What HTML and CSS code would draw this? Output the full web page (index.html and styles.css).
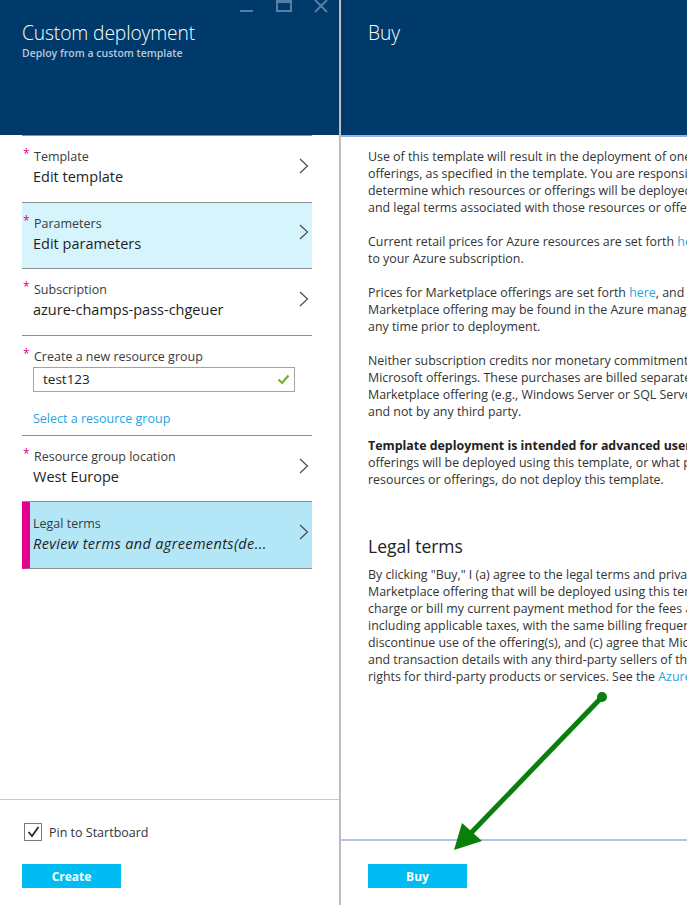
FILE: index.html
```html
<!DOCTYPE html>
<html>
<head>
<meta charset="utf-8">
<title>Custom deployment - Buy</title>
<link rel="stylesheet" href="styles.css">
</head>
<body>
<div class="app">
  <section class="blade blade-left">
    <header class="blade-header">
      <h1 class="blade-title">Custom deployment</h1>
      <div class="blade-subtitle">Deploy from a custom template</div>
      <svg class="win-controls" width="110" height="20" viewBox="0 0 110 20">
        <line x1="10" y1="11" x2="23" y2="11" stroke="#5a7da5" stroke-width="2"/>
        <rect x="47" y="-3" width="14" height="14" fill="none" stroke="#5a7da5" stroke-width="2"/>
        <rect x="47" y="-3" width="14" height="6" fill="#5a7da5"/>
        <line x1="85" y1="0" x2="97" y2="12" stroke="#5a7da5" stroke-width="2"/>
        <line x1="97" y1="0" x2="85" y2="12" stroke="#5a7da5" stroke-width="2"/>
      </svg>
    </header>
    <div class="blade-body">
      <div class="list">
        <div class="item">
          <div class="item-text">
            <div class="label"><span class="req">*</span>Template</div>
            <div class="value">Edit template</div>
          </div>
          <svg class="chev" width="10" height="16" viewBox="0 0 10 16"><polyline points="1,1 8.5,8 1,15" fill="none" stroke="#4a4a4a" stroke-width="1.2"/></svg>
        </div>
        <div class="item item-hl">
          <div class="item-text">
            <div class="label"><span class="req">*</span>Parameters</div>
            <div class="value">Edit parameters</div>
          </div>
          <svg class="chev" width="10" height="16" viewBox="0 0 10 16"><polyline points="1,1 8.5,8 1,15" fill="none" stroke="#4a4a4a" stroke-width="1.2"/></svg>
        </div>
        <div class="item">
          <div class="item-text">
            <div class="label"><span class="req">*</span>Subscription</div>
            <div class="value">azure-champs-pass-chgeuer</div>
          </div>
          <svg class="chev" width="10" height="16" viewBox="0 0 10 16"><polyline points="1,1 8.5,8 1,15" fill="none" stroke="#4a4a4a" stroke-width="1.2"/></svg>
        </div>
        <div class="item item-form">
          <div class="item-text">
            <div class="label"><span class="req">*</span>Create a new resource group</div>
            <div class="input">
              <span class="input-text">test123</span>
              <svg class="ok" width="13" height="11" viewBox="0 0 13 11"><polyline points="1.5,5.5 5,9 11.5,1.5" fill="none" stroke="#6cb32c" stroke-width="2.2"/></svg>
            </div>
            <a class="link">Select a resource group</a>
          </div>
        </div>
        <div class="item">
          <div class="item-text">
            <div class="label"><span class="req">*</span>Resource group location</div>
            <div class="value">West Europe</div>
          </div>
          <svg class="chev" width="10" height="16" viewBox="0 0 10 16"><polyline points="1,1 8.5,8 1,15" fill="none" stroke="#4a4a4a" stroke-width="1.2"/></svg>
        </div>
        <div class="item item-active">
          <div class="item-text">
            <div class="label">Legal terms</div>
            <div class="value value-italic">Review terms and agreements(de...</div>
          </div>
          <svg class="chev" width="10" height="16" viewBox="0 0 10 16"><polyline points="1,1 8.5,8 1,15" fill="none" stroke="#4a4a4a" stroke-width="1.2"/></svg>
        </div>
      </div>
    </div>
    <footer class="blade-footer footer-left">
      <label class="pin">
        <span class="checkbox"><svg width="13" height="12" viewBox="0 0 13 12"><polyline points="1.5,6 5,10 11.5,1" fill="none" stroke="#2b2b2b" stroke-width="1.8"/></svg></span>
        <span>Pin to Startboard</span>
      </label>
      <button class="btn">Create</button>
    </footer>
  </section>

  <section class="blade blade-right">
    <header class="blade-header header-right">
      <h1 class="blade-title">Buy</h1>
    </header>
    <div class="blade-body body-right">
      <div class="doc">
        <p>Use of this template will result in the deployment of one or more Azure resources or Marketplace<br>
        offerings, as specified in the template. You are responsible for reviewing the template to<br>
        determine which resources or offerings will be deployed, and for reviewing the pricing<br>
        and legal terms associated with those resources or offerings.</p>
        <p>Current retail prices for Azure resources are set forth <a class="link">here</a> and may not reflect discounts applicable<br>
        to your Azure subscription.</p>
        <p>Prices for Marketplace offerings are set forth <a class="link">here</a>, and the legal terms associated with any<br>
        Marketplace offering may be found in the Azure management portal; both are subject to change at<br>
        any time prior to deployment.</p>
        <p>Neither subscription credits nor monetary commitment funds may be used to purchase non-<br>
        Microsoft offerings. These purchases are billed separately. If any Microsoft products are included in a<br>
        Marketplace offering (e.g., Windows Server or SQL Server), such products are licensed by Microsoft<br>
        and not by any third party.</p>
        <p><strong>Template deployment is intended for advanced users only.</strong> If you are unsure of which resources or<br>
        offerings will be deployed using this template, or what prices or legal terms pertain to those<br>
        resources or offerings, do not deploy this template.</p>
        <h2 class="doc-heading">Legal terms</h2>
        <p>By clicking "Buy," I (a) agree to the legal terms and privacy statement(s) associated with each<br>
        Marketplace offering that will be deployed using this template, (b) authorize Microsoft to<br>
        charge or bill my current payment method for the fees associated with my use of the offering(s),<br>
        including applicable taxes, with the same billing frequency as my Azure subscription, until I<br>
        discontinue use of the offering(s), and (c) agree that Microsoft may share my contact information<br>
        and transaction details with any third-party sellers of the offering(s). Microsoft does not provide<br>
        rights for third-party products or services. See the <a class="link">Azure Marketplace Terms</a> for additional terms.</p>
      </div>
    </div>
    <footer class="blade-footer footer-right">
      <button class="btn">Buy</button>
    </footer>
  </section>

  <svg class="annotation" width="687" height="905" viewBox="0 0 687 905">
    <line x1="602" y1="697" x2="470" y2="834" stroke="#0a800c" stroke-width="5"/>
    <circle cx="602" cy="697" r="5" fill="#0a800c"/>
    <polygon points="454,850 462,823 482,841" fill="#0a800c"/>
  </svg>
</div>
</body>
</html>
```

FILE: styles.css
```css
* { box-sizing: border-box; }
html, body { margin: 0; padding: 0; }
body {
  width: 687px;
  height: 905px;
  overflow: hidden;
  background: #fff;
  font-family: "Open Sans", "Noto Sans", "DejaVu Sans", sans-serif;
  color: #333;
}
.app {
  position: relative;
  display: flex;
  width: 687px;
  height: 905px;
  overflow: hidden;
}
.blade {
  display: flex;
  flex-direction: column;
  height: 905px;
}
.blade-left {
  width: 340px;
  flex: none;
  border-right: 1px solid #aab8d8;
}
.blade-right {
  flex: 1;
  min-width: 0;
  border-left: 1px solid #c4c4c4;
}
.blade-header {
  position: relative;
  height: 135px;
  flex: none;
  background: #003a6b;
  padding: 20px 0 0 22px;
  color: #fff;
}
.header-right {
  height: 137px;
  border-bottom: 2px solid #8db4e8;
  padding-left: 27px;
}
.blade-title {
  margin: 0;
  font-size: 19.2px;
  font-weight: 300;
  line-height: 26px;
  letter-spacing: -0.1px;
}
.blade-subtitle {
  font-size: 10.5px;
  font-weight: 600;
  line-height: 14px;
  color: #b8c8da;
}
.win-controls {
  position: absolute;
  left: 230px;
  top: 0;
}
.blade-body {
  flex: 1;
  min-height: 0;
}
.list {
  margin: 0 27px 0 22px;
  border-top: 1px solid #8c9196;
}
.item {
  display: flex;
  align-items: center;
  padding: 12px 3px 14px 11px;
  border-bottom: 1px solid #8c9196;
  min-height: 66.6px;
}
.item-text {
  flex: 1;
  min-width: 0;
}
.item-hl { background: #d6f4fc; }
.item-active {
  background: #b3e7f8;
  border-left: 8px solid #e3008c;
  padding-left: 3px;
}
.label {
  font-size: 12.5px;
  line-height: 17px;
  color: #3a3a3a;
}
.req {
  display: inline-block;
  width: 11px;
  margin-left: -10px;
  color: #e3008c;
  font-size: 12px;
  vertical-align: top;
  line-height: 12px;
}
.value {
  margin-top: 2px;
  font-size: 14.5px;
  line-height: 20px;
  color: #1e1e1e;
}
.value-italic {
  font-style: italic;
  letter-spacing: 0.35px;
  white-space: nowrap;
  overflow: hidden;
}
.chev {
  flex: none;
  margin-top: -4px;
}
.item-form {
  padding-bottom: 8px;
  min-height: 100px;
}
.input {
  display: flex;
  align-items: center;
  justify-content: space-between;
  margin-top: 2px;
  width: 262px;
  height: 25px;
  border: 1px solid #a3a3a3;
  padding: 0 4px 0 9px;
}
.input-text {
  font-size: 13.5px;
  color: #1e1e1e;
}
.link {
  color: #1fa4e4;
  text-decoration: none;
}
.item-form .link {
  display: block;
  margin-top: 18px;
  font-size: 12.5px;
  line-height: 17px;
}
.blade-footer {
  flex: none;
  background: #fff;
}
.footer-left {
  height: 106px;
  border-top: 1px solid #c9c9c9;
  padding: 23px 0 0 22px;
}
.pin {
  display: flex;
  align-items: center;
  gap: 7px;
  padding-left: 2px;
  font-size: 12.5px;
  color: #333;
}
.checkbox {
  display: flex;
  align-items: center;
  justify-content: center;
  width: 18px;
  height: 18px;
  border: 1px solid #7a7a7a;
  background: #fff;
}
.btn {
  display: block;
  width: 99px;
  height: 24px;
  border: 0;
  padding: 0;
  background: #00bcf2;
  color: #fff;
  font-family: "Open Sans", "Noto Sans", sans-serif;
  font-size: 12px;
  font-weight: 700;
}
.footer-left .btn { margin-top: 23px; }
.footer-right {
  height: 66px;
  border-top: 2px solid #b3c5e3;
  padding: 23px 0 0 27px;
}
.body-right {
  padding: 11px 0 0 27px;
  overflow: hidden;
}
.doc {
  font-size: 12.4px;
  line-height: 17px;
  color: #333;
  white-space: nowrap;
  overflow: hidden;
}
.doc p { margin: 0 0 17px; }
.doc strong { font-weight: 700; color: #222; }
.doc-heading {
  margin: 46px 0 8px;
  font-size: 17.5px;
  font-weight: 400;
  line-height: 24px;
  color: #222;
}
.annotation {
  position: absolute;
  left: 0;
  top: 0;
  pointer-events: none;
}
```
